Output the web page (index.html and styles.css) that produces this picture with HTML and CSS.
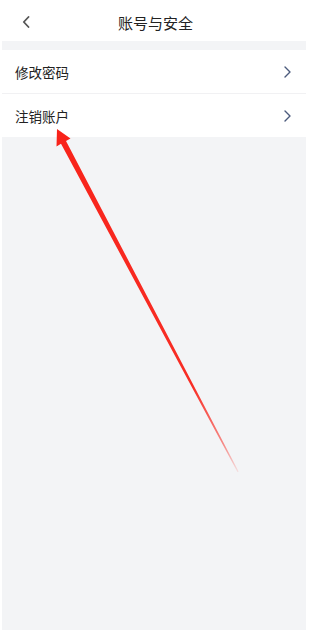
FILE: index.html
```html
<!DOCTYPE html>
<html lang="zh">
<head>
<meta charset="utf-8">
<title>账号与安全</title>
<link rel="stylesheet" href="styles.css">
</head>
<body>
<div class="page">
  <header class="header">
    <span class="back">
      <svg width="8" height="12" viewBox="0 0 8 12"><path d="M6.5 1 L1.8 6 L6.5 11" fill="none" stroke="#555" stroke-width="1.8" stroke-linecap="round" stroke-linejoin="round"/></svg>
    </span>
    <h1 class="title">账号与安全</h1>
    <span></span>
  </header>
  <main class="content">
    <ul class="list">
      <li class="row"><span class="label">修改密码</span>
        <svg class="chev" width="7" height="12" viewBox="0 0 7 12"><path d="M1 1 L6 6 L1 11" fill="none" stroke="#4b5a7c" stroke-width="1.4" stroke-linecap="round" stroke-linejoin="round"/></svg>
      </li>
      <li class="row"><span class="label">注销账户</span>
        <svg class="chev" width="7" height="12" viewBox="0 0 7 12"><path d="M1 1 L6 6 L1 11" fill="none" stroke="#4b5a7c" stroke-width="1.4" stroke-linecap="round" stroke-linejoin="round"/></svg>
      </li>
    </ul>
  </main>
  <svg class="arrow" width="311" height="630" viewBox="0 0 311 630">
    <defs>
      <linearGradient id="ag" gradientUnits="userSpaceOnUse" x1="57" y1="130" x2="238" y2="472">
        <stop offset="0" stop-color="#f8231a"/>
        <stop offset="0.75" stop-color="#f8231a" stop-opacity="0.95"/>
        <stop offset="0.92" stop-color="#f8231a" stop-opacity="0.5"/>
        <stop offset="1" stop-color="#f8231a" stop-opacity="0.1"/>
      </linearGradient>
    </defs>
    <polygon fill="url(#ag)" points="57,129 70.5,138.5 66,141 238.6,471.6 237.6,472.2 61,143.8 56.5,146.5"/>
  </svg>
</div>
</body>
</html>
```
FILE: styles.css
```css
* { box-sizing: border-box; }
html, body { margin: 0; padding: 0; background: #fff; }
body {
  font-family: "Noto Sans CJK SC", "Noto Sans", sans-serif;
  color: #222;
}
.page {
  position: relative;
  width: 311px;
  height: 630px;
  display: flex;
  flex-direction: column;
  overflow: hidden;
}
.header {
  height: 41px;
  display: grid;
  grid-template-columns: 1fr auto 1fr;
  align-items: center;
  flex-shrink: 0;
}
.back {
  display: flex;
  align-items: center;
  padding-left: 22px;
  padding-top: 2px;
}
.title {
  margin: 0;
  font-size: 15px;
  font-weight: 400;
  color: #222;
  line-height: 1;
  padding-top: 4px;
}
.content {
  flex: 1;
  margin: 0 5px 0 2px;
  background: #f3f4f6;
  padding-top: 9px;
}
.list {
  list-style: none;
  margin: 0;
  padding: 0;
  background: #fff;
}
.row {
  height: 44px;
  display: flex;
  align-items: center;
  justify-content: space-between;
  padding: 0 15px 0 13px;
}
.row + .row {
  border-top: 1px solid #f1f1f3;
}
.row:first-child { height: 43px; }
.label {
  font-size: 13.5px;
  color: #222;
  letter-spacing: 0;
}
.chev { display: block; }
.arrow {
  position: absolute;
  left: 0;
  top: 0;
  pointer-events: none;
}
```
